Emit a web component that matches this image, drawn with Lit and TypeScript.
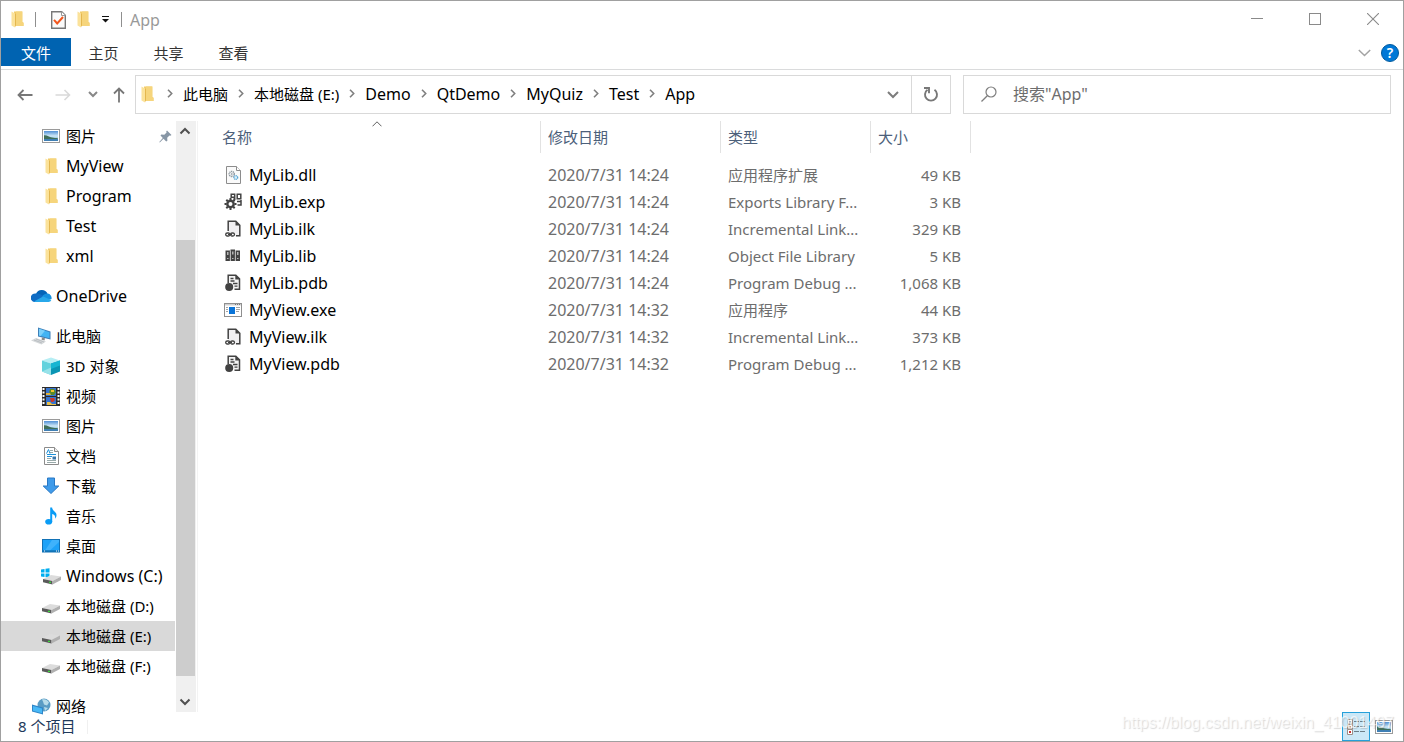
import { LitElement, html, css, svg, nothing, type TemplateResult } from "lit";
import { customElement, property } from "lit/decorators.js";

type Art = { w: number; h: number; art: TemplateResult };

const landscape = svg`
  <defs>
    <linearGradient id="sky" x1="0" y1="0" x2="0" y2="1">
      <stop offset="0" stop-color="#4f8fd6"/><stop offset=".5" stop-color="#cfe8f7"/><stop offset="1" stop-color="#5aa0c8"/>
    </linearGradient>
  </defs>
  <rect x=".5" y=".5" width="17" height="13" fill="#fff" stroke="#9a9a9a"/>
  <rect x="2" y="2" width="14" height="10" fill="url(#sky)"/>
  <path d="M2 6.2c3-.4 5 1.600 8 2.200 2 .4 4 .3 6 1V10H2z" fill="#3f6f5a"/>
  <path d="M2 10h14v2H2z" fill="#3f7fb4"/>`;

const drive = svg`
  <path d="M0 9 8 5 18 6.500 9.500 11z" fill="#dcdcdc"/>
  <path d="M0 9 9.500 11V14.500L0 12.300z" fill="#5a5a5a"/>
  <path d="M9.500 11 18 6.500V10L9.500 14.500z" fill="#b0b0b0"/>
  <path d="M6 11.800h2V13H6z" fill="#3ddc3d"/>`;

const ART: Record<string, Art> = {
  picture: { w: 18, h: 14, art: landscape },
  folder: { w: 13, h: 17, art: svg`
    <path d="M3 .5h8.300v10.500l1.200.8V15H4z" fill="#f2cb67"/>
    <path d="M5 .5h6.300v10.500l1.200.8V15H5z" fill="#f6d57c"/>
    <path d="M.5.5 4 2.500V16.500L.5 14.500z" fill="#fbe29a"/>
    <path d="M4 2.500 4.900 3v11L4 16.500z" fill="#e3b54d"/>` },
  onedrive: { w: 21, h: 14, art: svg`
    <path d="M5 5A6.200 6.200 0 0 1 16.500 4.600L10 9z" fill="#0364b8"/>
    <path d="M3 13A4.300 4.300 0 0 1 5.200 4.600C7 4.200 9 5 11 6.300L14 8 4 13z" fill="#0f6cc4"/>
    <path d="M11 7.500C13 5 15 4.300 16.700 4.600A4.500 4.500 0 0 1 20.500 10L17 11z" fill="#1490df"/>
    <path d="M3 12.600 12 7.500l8.300 3.400A3 3 0 0 1 17.500 13H4.500Q3.500 13 3 12.600z" fill="#28a8ea"/>` },
  pc: { w: 20, h: 18, art: svg`
    <path d="M7 .5 19.500 4.500V12.500L7 9.500z" fill="#3f7fb8"/>
    <path d="M8 1.800 18.500 5.300V11.200L8 8.600z" fill="#42b4f4"/>
    <path d="M8 1.800 14 3.800 9.500 9 8 8.600z" fill="#7bd0fb"/>
    <path d="M11 10.500 14 11.300 13.500 13.500 10.500 12.800z" fill="#888"/>
    <path d="M0 13.500 5 11 15 14.500 10.500 17.500z" fill="#d5d8da"/>
    <path d="M3 13 11 16M5 12l8 3" stroke="#aeb3b7" stroke-width=".7"/>` },
  cube: { w: 18, h: 18, art: svg`
    <path d="M9 .5 18 3.500 9 6.500 0 3.500z" fill="#b6eef4"/>
    <path d="M0 3.500 9 6.500V18L0 14.500z" fill="#62d2dd"/>
    <path d="M9 6.500 18 3.500V14.500L9 18z" fill="#0a95b4"/>
    <path d="M9 18 0 14.500 9 10.500z" fill="#98e2e9"/>
    <path d="M9 6.500 18 3.500v5L9 12z" fill="#16b5d2"/>` },
  video: { w: 18, h: 19, art: svg`
    <path d="M0 0h18v19H0z" fill="#2b2b2b"/>
    <path d="M1.500 1v17M16.500 1v17" stroke="#fff" stroke-width="2" stroke-dasharray="2 1.500"/>
    <path d="M4 1h10v8H4zM4 10h10v8H4z" fill="#3674d0"/>
    <path d="M8 2h4l2 3-2 3H9L7 5z" fill="#5a8a28"/><path d="M9 3h3v2H9z" fill="#f4c430"/>
    <path d="M4 6h4l1 2H4z" fill="#e2b23a"/><path d="M8 11h4l1 2-2 2H9z" fill="#c9382b"/>
    <path d="M5 15h3l2 2h4v1H5z" fill="#e9bf48"/>` },
  document: { w: 15, h: 18, art: svg`
    <path d="M.5.5h10l4 4v13H.5z" fill="#fff" stroke="#8b8b8b"/>
    <path d="M10.500.5v4h4" fill="#eee" stroke="#8b8b8b"/>
    <path d="M6 3.500h3M5.500 5.500H9M3 13.500h9M3 15.500h9M3 11.500h4" stroke="#9aa"/>
    <path d="m2.500 6.500 2-4 1.500 4M3 7.500h9M3 9.500h5" stroke="#1e90d8" fill="none"/>
    <path d="M8.500 9.500H12v3H8.500z" fill="#3a75a8"/>` },
  download: { w: 18, h: 18, art: svg`
    <path d="M5.500 1h7v8h4.300L9 16.500 1.200 9h4.300z" fill="#3f9bea" stroke="#2978c4"/>` },
  music: { w: 12, h: 18, art: svg`
    <ellipse cx="3.700" cy="14.800" rx="3.500" ry="2.800" fill="#0a9cf5"/>
    <path d="M5.200.5h1.900C7.300 4 11.500 4.500 11.500 8c0 1.600-.5 2.800-1.300 3.800.3-2.600-.7-4.300-3-4.800v8H5.200z" fill="#0a9cf5"/>` },
  desktop: { w: 18, h: 14, art: svg`
    <rect x=".5" y=".5" width="17" height="12.500" fill="#1da2f8" stroke="#1272b6"/>
    <path d="M10 1h7v2L8 11.500H3z" fill="#3fb2fb"/>
    <path d="M1 12h16" stroke="#0d5c96"/><path d="M2 12h1M14 12h1M16 12h1" stroke="#fff"/>` },
  windrive: { w: 20, h: 17, art: svg`
    <path d="M0 1.500 3.500 1v3.500H0zM4.500.8 8.500.2v4.300h-4zM0 5.500h3.500V9L0 8.500zM4.500 5.500h4v4.200l-4-.6z" fill="#00adef"/>
    <g transform="translate(2 2)">${drive}</g>` },
  drive: { w: 18, h: 15, art: drive },
  network: { w: 19, h: 17, art: svg`
    <circle cx="12" cy="7" r="6.500" fill="#5a9cc4"/>
    <path d="M10 1.500c3-1 6 1 7 3l-2 3-3-1-1-3zM12 9l4 1-3 3z" fill="#b7dcea"/>
    <path d="M0 6.500 11 9.500V16.500L0 13.500z" fill="#2f86c8"/>
    <path d="M1 8 10 10.500V15.300L1 12.800z" fill="#48b8f6"/>` },
  dll: { w: 15, h: 18, art: svg`
    <path d="M.5.5h10l4 4v13H.5z" fill="#fafafa" stroke="#8c8c8c"/>
    <path d="M10.500.5v4h4" fill="#fff" stroke="#8c8c8c"/>
    <circle cx="5.700" cy="8" r="2.500" fill="none" stroke="#8a949c" stroke-width="1.500" stroke-dasharray="1.200 .6"/>
    <circle cx="5.700" cy="8" r="1" fill="#a5adb3"/>
    <circle cx="9.800" cy="11.500" r="1.900" fill="#d9eefa" stroke="#5aa7d4" stroke-width="1.300" stroke-dasharray="1.100 .5"/>` },
  exp: { w: 18, h: 18, art: svg`
    <g fill="none" stroke="#424242"><circle cx="6.500" cy="11" r="3.200" stroke-width="2.400"/>
    <path d="M6.500 5v2M6.500 15v2M.5 11h2M10.500 11h2M2.300 6.800l1.400 1.400M9.300 13.800l1.400 1.400M2.300 15.200l1.400-1.400M9.300 8.200l1.400-1.400" stroke-width="2"/>
    <path d="M7.200 1.200h3.500v3H7.200zM13.200 1.200h3.600v4.500h-3.600z" stroke-width="1.500"/>
    <path d="M13 8.500h4M17 7v5h-3.500" stroke-width="1.500"/></g>
    <path d="M9.500 5h2v2h-2z" fill="#424242"/>` },
  ilk: { w: 16, h: 18, art: svg`
    <path d="M3 1h8l4 4v11.500H10V12H3z" fill="#f0eff1"/>
    <path d="M3.200 11V1.200h7.600l4 4v10.600H11" fill="none" stroke="#424242" stroke-width="1.500"/>
    <path d="M10.500 1v4.500H15" fill="#424242"/>
    <g fill="none" stroke="#424242" stroke-width="1.300"><rect x=".7" y="13" width="4.300" height="3" rx="1.500"/><rect x="5.500" y="13" width="4" height="3" rx="1.500"/></g>
    <path d="M3 14.500h4" stroke="#424242"/>` },
  lib: { w: 16, h: 16, art: svg`
    <path d="M.5 2.500h4.500V13H.5zM5.500 1.500h4.500V13H5.500zM10.500 2.500H15V13h-4.500z" fill="#424242"/>
    <path d="M5.250 3v10M10.250 3v10" stroke="#ddd" stroke-width=".5"/>
    <path d="M2 4h1.500v3H2zM7 3.500h1.500v3H7zM12 4h1.500v3H12zM2 10h1.500v1H2zM7 10h1.500v1H7zM12 10h1.500v1H12z" fill="#b5b5b5"/>` },
  pdb: { w: 16, h: 18, art: svg`
    <path d="M3.200 9V1.200h7.600l3.700 3.700v10.400H9.500" fill="#f4f4f4" stroke="#424242" stroke-width="1.500"/>
    <path d="M10.300 1v4.500h4.500" fill="#424242"/>
    <path d="M5.500 4.500h3M5.500 7h4M8 9.500h4.500M9.500 12.200h3" stroke="#424242" stroke-width="1.300"/>
    <circle cx="4.200" cy="13" r="4" fill="#424242"/>` },
  exe: { w: 18, h: 14, art: svg`
    <rect x=".5" y=".5" width="17" height="13" fill="#fff" stroke="#8f8f8f"/>
    <path d="M1 1h16v1.500H1z" fill="#d0d0d0"/><path d="M11 1.500h1M13 1.500h1M15 1.500h1" stroke="#777"/>
    <path d="M5 4h6v7H5z" fill="#0a74d8"/>
    <path d="M2 4.500h2M2 6.500h2M2 8.500h2M12 4.500h4M12 6.500h4M12 8.500h3" stroke="#a5a5a5"/>` },
  check: { w: 15, h: 18, art: svg`
    <path d="M.7.7h10l3.600 3.600v13H.7z" fill="#fafafa" stroke="#777" stroke-width="1.400"/>
    <path d="M10.500.7v3.800h3.800" fill="#fff" stroke="#999"/>
    <path d="m3 8.800 3.200 3.700L12 6" fill="none" stroke="#f2561d" stroke-width="2"/>` },
  dropdown: { w: 7, h: 7, art: svg`<path d="M0 .5h7" stroke="#111"/><path d="M0 3h7L3.500 6.500z" fill="#111"/>` },
  back: { w: 16, h: 12, art: svg`<path d="M15.500 6H1.500M6.500 1 1.500 6l5 5" fill="none" stroke="#777" stroke-width="1.800"/>` },
  forward: { w: 16, h: 12, art: svg`<path d="M.5 6h14M9.500 1l5 5-5 5" fill="none" stroke="#d9d9d9" stroke-width="1.600"/>` },
  up: { w: 12, h: 16, art: svg`<path d="M6 15.500V1.500M1 6.500l5-5 5 5" fill="none" stroke="#777" stroke-width="1.800"/>` },
  down: { w: 10, h: 7, art: svg`<path d="m1 1 4 4 4-4" fill="none" stroke="#888" stroke-width="2"/>` },
  downWide: { w: 12, h: 8, art: svg`<path d="m1 1 5 5 5-5" fill="none" stroke="#7c7c7c" stroke-width="2"/>` },
  expand: { w: 13, h: 8, art: svg`<path d="m.8 1 5.700 5.500L12.200 1" fill="none" stroke="#a3a3a3" stroke-width="1.500"/>` },
  crumb: { w: 6, h: 9, art: svg`<path d="m1 .8 3.700 3.700L1 8.200" fill="none" stroke="#808080" stroke-width="1.600"/>` },
  refresh: { w: 16, h: 16, art: svg`
    <path d="M11.500 2.800A6 6 0 1 1 4.500 2.800" fill="none" stroke="#787878" stroke-width="1.900"/>
    <path d="M1 1h5v5.200" fill="none" stroke="#787878" stroke-width="1.900"/>` },
  search: { w: 16, h: 16, art: svg`
    <circle cx="10" cy="6" r="5" fill="none" stroke="#7e7e7e" stroke-width="1.200"/>
    <path d="M6.300 9.700.5 15.500" stroke="#7e7e7e" stroke-width="1.300"/>` },
  minimize: { w: 12, h: 12, art: svg`<path d="M0 5.500h12" stroke="#8a8a8a"/>` },
  maximize: { w: 12, h: 12, art: svg`<rect x=".5" y=".5" width="11" height="11" fill="none" stroke="#8a8a8a"/>` },
  close: { w: 12, h: 12, art: svg`<path d="m0 0 12 12M12 0 0 12" stroke="#8a8a8a" stroke-width="1.100"/>` },
  pin: { w: 13, h: 13, art: svg`
    <path d="M8 .5 12.500 5l-1.200.8-.8-.3-2.300 2.300.2 2.900-1.200.8-2.700-2.700L.8 12.500.3 12l3.500-3.900L1.500 5.600l.8-1.200 3 .3 2.300-2.300-.4-.9z" fill="#8796a5"/>` },
  scrollUp: { w: 12, h: 8, art: svg`<path d="m1.500 6.500 4.500-4.500 4.500 4.500" fill="none" stroke="#505050" stroke-width="2"/>` },
  scrollDown: { w: 12, h: 8, art: svg`<path d="m1.500 1.500 4.500 4.500 4.500-4.500" fill="none" stroke="#505050" stroke-width="2"/>` },
  sort: { w: 10, h: 6, art: svg`<path d="m.5 5.300 4.500-4.500 4.500 4.500" fill="none" stroke="#606060"/>` },
  details: { w: 18, h: 16, art: svg`
    <g fill="#fff" stroke="#9a8f88"><path d="M.5.5h5v4.500h-5zM.5 5.500h5V10h-5zM.5 10.500h5v5h-5z"/></g>
    <path d="M2.500 2h1.500v1.500H2.500z" fill="#555"/><path d="M2.500 7h1.500v1.500H2.500z" fill="#c96"/><path d="M2 12h2v2H2z" fill="#c33"/>
    <path d="M7 2.500h5M13 2.500h5M7 7.500h5M13 7.500h5M7 12.500h5M13 12.500h5" stroke="#6d7f88"/>` },
};

@customElement("ui-icon")
export class UiIcon extends LitElement {
  @property() name = "folder";
  static styles = css`
    :host { display: inline-flex; flex: none; }
    svg { display: block; }
  `;
  render() {
    const a = ART[this.name];
    return html`<svg width=${a.w} height=${a.h} viewBox="0 0 ${a.w} ${a.h}" aria-hidden="true">${a.art}</svg>`;
  }
}

type Place = { label: string; icon: string; root?: boolean; pinned?: boolean; current?: boolean };

const GROUPS: Place[][] = [
  [
    { label: "图片", icon: "picture", pinned: true },
    { label: "MyView", icon: "folder" },
    { label: "Program", icon: "folder" },
    { label: "Test", icon: "folder" },
    { label: "xml", icon: "folder" },
  ],
  [{ label: "OneDrive", icon: "onedrive", root: true }],
  [
    { label: "此电脑", icon: "pc", root: true },
    { label: "3D 对象", icon: "cube" },
    { label: "视频", icon: "video" },
    { label: "图片", icon: "picture" },
    { label: "文档", icon: "document" },
    { label: "下载", icon: "download" },
    { label: "音乐", icon: "music" },
    { label: "桌面", icon: "desktop" },
    { label: "Windows (C:)", icon: "windrive" },
    { label: "本地磁盘 (D:)", icon: "drive" },
    { label: "本地磁盘 (E:)", icon: "drive", current: true },
    { label: "本地磁盘 (F:)", icon: "drive" },
  ],
  [{ label: "网络", icon: "network", root: true }],
];

const FILES = [
  ["dll", "MyLib.dll", "2020/7/31 14:24", "应用程序扩展", "49 KB"],
  ["exp", "MyLib.exp", "2020/7/31 14:24", "Exports Library F...", "3 KB"],
  ["ilk", "MyLib.ilk", "2020/7/31 14:24", "Incremental Link...", "329 KB"],
  ["lib", "MyLib.lib", "2020/7/31 14:24", "Object File Library", "5 KB"],
  ["pdb", "MyLib.pdb", "2020/7/31 14:24", "Program Debug ...", "1,068 KB"],
  ["exe", "MyView.exe", "2020/7/31 14:32", "应用程序", "44 KB"],
  ["ilk", "MyView.ilk", "2020/7/31 14:32", "Incremental Link...", "373 KB"],
  ["pdb", "MyView.pdb", "2020/7/31 14:32", "Program Debug ...", "1,212 KB"],
];

const PATH = ["此电脑", "本地磁盘 (E:)", "Demo", "QtDemo", "MyQuiz", "Test", "App"];

/** Latin-only labels are set one size up from Chinese ones. */
const scriptClass = (s: string) => (/^[\x00-\x7f]*$/.test(s) ? "latin" : "");

@customElement("app-root")
export class AppRoot extends LitElement {
  static styles = css`
    :host {
      display: block;
      font: 15px/20px "Noto Sans", "Noto Sans CJK SC", sans-serif;
      color: #000;
    }
    * { box-sizing: border-box; }
    button, input { font: inherit; color: inherit; border: 0; background: none; padding: 0; margin: 0; }
    a { color: inherit; text-decoration: none; }
    button { display: inline-flex; align-items: center; justify-content: center; }
    .latin { font-size: 16px; }
    .window {
      position: relative;
      display: flex;
      flex-direction: column;
      height: 100vh;
      border: 1px solid #a0a0a0;
      background: #fff;
      overflow: hidden;
    }
    .titlebar { display: flex; align-items: center; height: 37px; padding-left: 10px; flex: none; }
    .bar { width: 1px; height: 15px; background: #8f8f8f; }
    .quick { display: flex; align-items: center; }
    .quick .bar:first-of-type { margin: 0 15px 0 11px; }
    .quick button { margin-right: 12px; }
    .quick button:first-of-type { margin-right: 11px; }
    .quick .bar:last-of-type { margin: 0 8px 0 0; }
    .title { flex: 1; margin: 0; font-size: 16px; font-weight: 400; color: #999; }
    .controls { display: flex; height: 37px; padding-right: 1px; }
    .controls button { width: 58px; height: 35px; }
    .ribbon { display: flex; height: 32px; border-bottom: 1px solid #dadbdc; flex: none; }
    .tab { height: 28px; width: 65px; padding-top: 2px; color: #333; }
    .tab.file { width: 70px; background: #0063b1; color: #fff; }
    .ribbon .end { margin-left: auto; display: flex; align-items: center; height: 30px; gap: 10px; padding-right: 4px; }
    .help { width: 18px; height: 18px; border-radius: 50%; background: #0078d7; border: 1px solid #005a9e; color: #fff; font-size: 14px; font-weight: 600; line-height: 16px; }
    .nav { display: flex; align-items: center; height: 49px; padding: 0 12px 0 16px; flex: none; }
    .nav .back { width: 16px; }
    .nav .forward { width: 16px; margin-left: 22px; }
    .nav .recent { width: 10px; margin-left: 17px; }
    .nav .parent { width: 12px; margin: 0 10px 0 15px; }
    .address { display: flex; flex: 816 1 816px; height: 39px; border: 1px solid #d9d9d9; align-items: center; min-width: 0; }
    .address > ui-icon { margin-left: 5px; }
    .crumbs { display: flex; align-items: center; flex: 1; margin: 0; padding: 0 0 2px 13px; list-style: none; white-space: nowrap; }
    .crumbs li { display: flex; align-items: center; gap: 10px; margin-right: 10px; }
    .address .history { width: 36px; height: 37px; }
    .address .refresh { width: 39px; height: 37px; border-left: 1px solid #d9d9d9; }
    .search { display: flex; align-items: center; flex: 428 1 428px; height: 39px; margin-left: 12px; padding: 0 0 2px 17px; gap: 16px; border: 1px solid #d9d9d9; min-width: 0; }
    .search input { flex: 1; min-width: 0; height: 24px; outline: 0; font-size: 16px; }
    .search input::placeholder { color: #6d6d6d; opacity: 1; }
    .body { display: flex; flex: 1; min-height: 0; padding-top: 2px; }
    .tree { width: 175px; flex: none; }
    .tree ul { margin: 0 0 10px; padding: 0; list-style: none; }
    .tree ul:last-child { margin: 0; }
    .place { display: grid; grid-template-columns: 20px 1fr auto; column-gap: 5px; align-items: center; height: 30px; margin-right: 1px; padding: 0 3px 0 40px; white-space: nowrap; }
    .place.root { padding-left: 30px; }
    .place ui-icon:first-child { justify-self: center; }
    .place.current { background: #d9d9d9; }
    .scroll { display: flex; flex-direction: column; width: 20px; flex: none; background: #f0f0f0; }
    .scroll button { height: 20px; width: 18px; flex: none; }
    .thumb { width: 19px; background: #cdcdcd; flex: 436 1 0; margin: 0; }
    .space { flex: 99 1 0; }
    .space.end { flex: 16 1 0; }
    .list { flex: 1; min-width: 0; margin-left: 1px; border-left: 1px solid #f3f3f3; }
    table { border-collapse: separate; border-spacing: 0; table-layout: fixed; width: 773px; }
    th { position: relative; height: 32px; padding: 0 0 0 7px; border-right: 1px solid #e2e2e2; text-align: left; font-weight: 400; color: #4c607a; }
    th.name { width: 343px; padding-left: 24px; }
    th.date { width: 180px; }
    th.type { width: 150px; }
    th.size { width: 100px; }
    th .sort { position: absolute; top: 0; left: 174px; }
    tbody::before { content: ""; display: block; height: 8px; }
    td { height: 27px; padding: 0 10px 0 7px; color: #6d6d6d; white-space: nowrap; overflow: hidden; }
    td.name { padding-left: 26px; color: #000; }
    td.size { text-align: right; padding-left: 0; }
    .file { display: grid; grid-template-columns: 18px 1fr; column-gap: 7px; align-items: center; }
    .file ui-icon { justify-self: center; }
    button.file { display: inline-flex; }
    .status { display: flex; align-items: center; height: 29px; padding-left: 17px; flex: none; color: #1e395b; }
    .status .count { padding-bottom: 2px; }
    .status .mark { width: 1px; height: 14px; margin-left: 12px; background: #f0f0f0; }
    .views { display: flex; margin-left: auto; padding-right: 5px; }
    .views button { width: 28px; height: 29px; }
    .views .on { background: #cbe8f7; border: 1px solid #26a0da; }
    .watermark { position: absolute; right: 9px; bottom: 8px; font: 16px/20px "Liberation Sans", sans-serif; color: rgba(255, 255, 255, .7); text-shadow: 1px 1px 1px rgba(120, 120, 120, .28); }
  `;

  private place(p: Place) {
    return html`<li>
      <a href="#" class="place ${p.root ? "root" : ""} ${p.current ? "current" : ""}">
        <ui-icon name=${p.icon}></ui-icon><span class=${scriptClass(p.label)}>${p.label}</span>
        ${p.pinned ? html`<ui-icon name="pin"></ui-icon>` : nothing}
      </a>
    </li>`;
  }

  render() {
    return html`
      <div class="window">
        <header class="titlebar">
          <div class="quick">
            <ui-icon name="folder"></ui-icon>
            <span class="bar"></span>
            <button aria-label="属性"><ui-icon name="check"></ui-icon></button>
            <button aria-label="新建文件夹"><ui-icon name="folder"></ui-icon></button>
            <button aria-label="自定义"><ui-icon name="dropdown"></ui-icon></button>
            <span class="bar"></span>
          </div>
          <h1 class="title">App</h1>
          <div class="controls">
            <button aria-label="最小化"><ui-icon name="minimize"></ui-icon></button>
            <button aria-label="最大化"><ui-icon name="maximize"></ui-icon></button>
            <button aria-label="关闭"><ui-icon name="close"></ui-icon></button>
          </div>
        </header>

        <nav class="ribbon">
          <button class="tab file">文件</button>
          <button class="tab">主页</button>
          <button class="tab">共享</button>
          <button class="tab">查看</button>
          <div class="end">
            <button aria-label="展开功能区"><ui-icon name="expand"></ui-icon></button>
            <button class="help" aria-label="帮助">?</button>
          </div>
        </nav>

        <div class="nav">
          <button class="back" aria-label="返回"><ui-icon name="back"></ui-icon></button>
          <button class="forward" aria-label="前进"><ui-icon name="forward"></ui-icon></button>
          <button class="recent" aria-label="最近"><ui-icon name="down"></ui-icon></button>
          <button class="parent" aria-label="上移"><ui-icon name="up"></ui-icon></button>
          <div class="address">
            <ui-icon name="folder"></ui-icon>
            <ol class="crumbs">
              ${PATH.map((p) => html`<li><ui-icon name="crumb"></ui-icon><a href="#" class=${scriptClass(p)}>${p}</a></li>`)}
            </ol>
            <button class="history" aria-label="历史"><ui-icon name="downWide"></ui-icon></button>
            <button class="refresh" aria-label="刷新"><ui-icon name="refresh"></ui-icon></button>
          </div>
          <label class="search">
            <ui-icon name="search"></ui-icon>
            <input type="text" aria-label="搜索" placeholder='搜索"App"' />
          </label>
        </div>

        <div class="body">
          <nav class="tree">${GROUPS.map((g) => html`<ul>${g.map((p) => this.place(p))}</ul>`)}</nav>
          <div class="scroll">
            <button aria-label="向上滚动"><ui-icon name="scrollUp"></ui-icon></button>
            <div class="space"></div>
            <div class="thumb"></div>
            <div class="space end"></div>
            <button aria-label="向下滚动"><ui-icon name="scrollDown"></ui-icon></button>
          </div>
          <main class="list">
            <table>
              <thead>
                <tr>
                  <th class="name">名称<ui-icon class="sort" name="sort"></ui-icon></th>
                  <th class="date">修改日期</th>
                  <th class="type">类型</th>
                  <th class="size">大小</th>
                </tr>
              </thead>
              <tbody>
                ${FILES.map(([icon, name, date, type, size]) => html`<tr>
                  <td class="name"><div class="file"><ui-icon name=${icon}></ui-icon><span class="latin">${name}</span></div></td>
                  <td class="latin">${date}</td>
                  <td>${type}</td>
                  <td class="size">${size}</td>
                </tr>`)}
              </tbody>
            </table>
          </main>
        </div>

        <footer class="status">
          <span class="count">8 个项目</span><span class="mark"></span>
          <div class="views">
            <button class="on" aria-label="详细信息"><ui-icon name="details"></ui-icon></button>
            <button class="large" aria-label="大图标"><ui-icon name="picture"></ui-icon></button>
          </div>
        </footer>
        <div class="watermark">https://blog.csdn.net/weixin_41001497</div>
      </div>
    `;
  }
}
